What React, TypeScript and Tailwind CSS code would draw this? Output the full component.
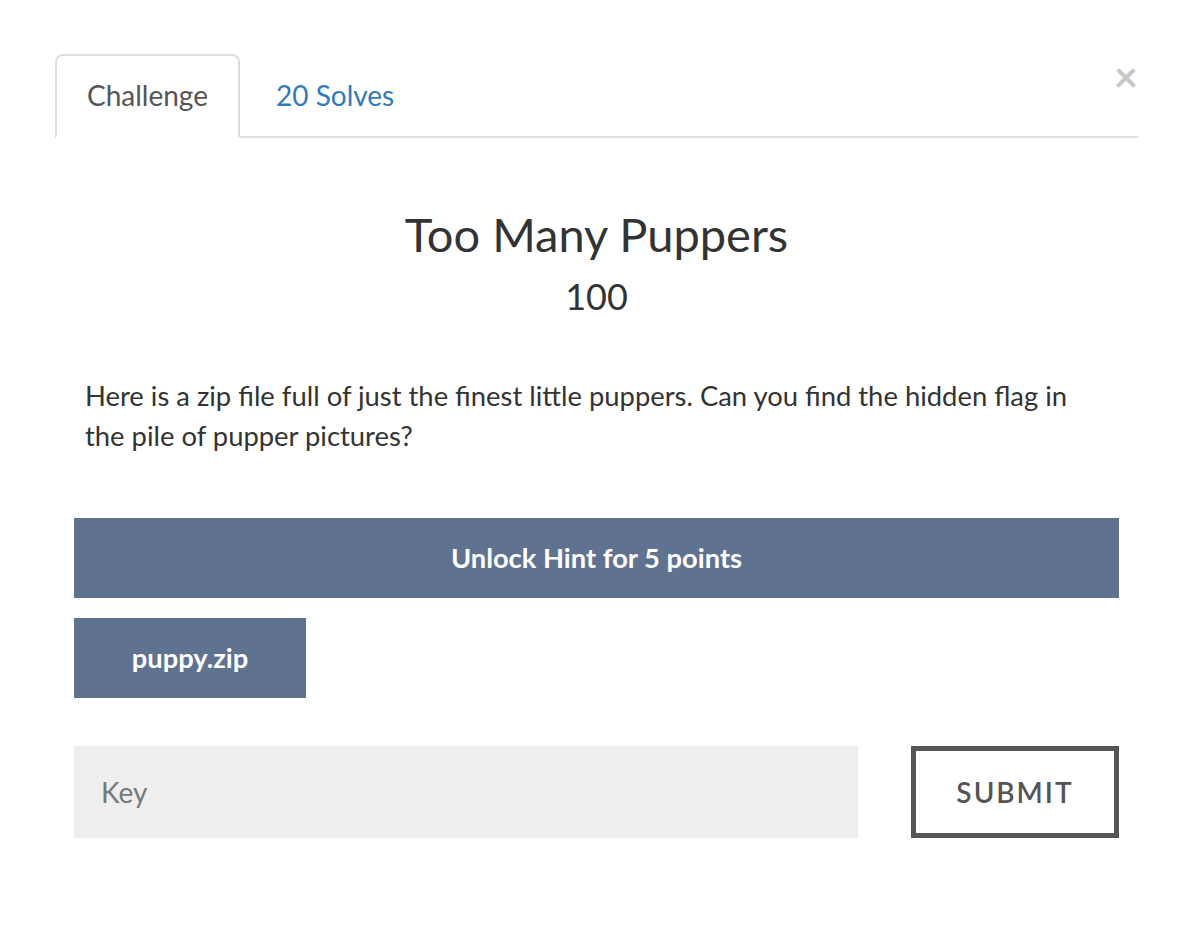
import React from "react";

export default function App() {
  return (
    <div className="w-[1192px] h-[950px] bg-white text-[#333] font-['Lato','Noto_Sans',sans-serif] relative">
      <div className="pt-[54px] pl-[55px] pr-[54px]">
        <div className="relative">
          <button className="absolute right-[0px] top-[1px] text-[42px] leading-none font-bold text-[#c8c8c8]">×</button>
          <div className="flex border-b-2 border-[#ddd]">
            <div className="-mb-[2px] border-2 border-[#ddd] border-b-white rounded-t-[8px] px-[30px] py-[19px] text-[28px] leading-[40px] text-[#555] bg-white">
              Challenge
            </div>
            <div className="ml-[4px] border-2 border-transparent px-[30px] py-[19px] text-[28px] leading-[40px] text-[#337ab7]">
              20 Solves
            </div>
          </div>
        </div>
        <div className="px-[19px]">
          <h2 className="mt-[68px] text-center text-[47px] leading-[56px]">Too Many Puppers</h2>
          <h3 className="mt-[12px] text-center text-[36px] leading-[44px]">100</h3>
          <p className="mt-[58px] px-[11px] text-[27.4px] leading-[40px]">
            Here is a zip file full of just the finest little puppers. Can you find the hidden flag in the pile of pupper pictures?
          </p>
          <div className="mt-[62px] h-[80px] bg-[#5f7290] text-white font-bold text-[27.3px] flex items-center justify-center">
            Unlock Hint for 5 points
          </div>
          <div className="mt-[20px] w-[232px] h-[80px] bg-[#5f7290] text-white font-bold text-[27.3px] flex items-center justify-center">
            puppy.zip
          </div>
          <div className="mt-[48px] flex justify-between">
            <div className="w-[784px] h-[92px] bg-[#eeeeee] flex items-center pl-[27px] text-[28px] text-[#777]">
              Key
            </div>
            <div className="w-[208px] h-[92px] border-[5px] border-[#555] flex items-center justify-center text-[28px] font-semibold tracking-[2px] text-[#555]">
              SUBMIT
            </div>
          </div>
        </div>
      </div>
    </div>
  );
}
